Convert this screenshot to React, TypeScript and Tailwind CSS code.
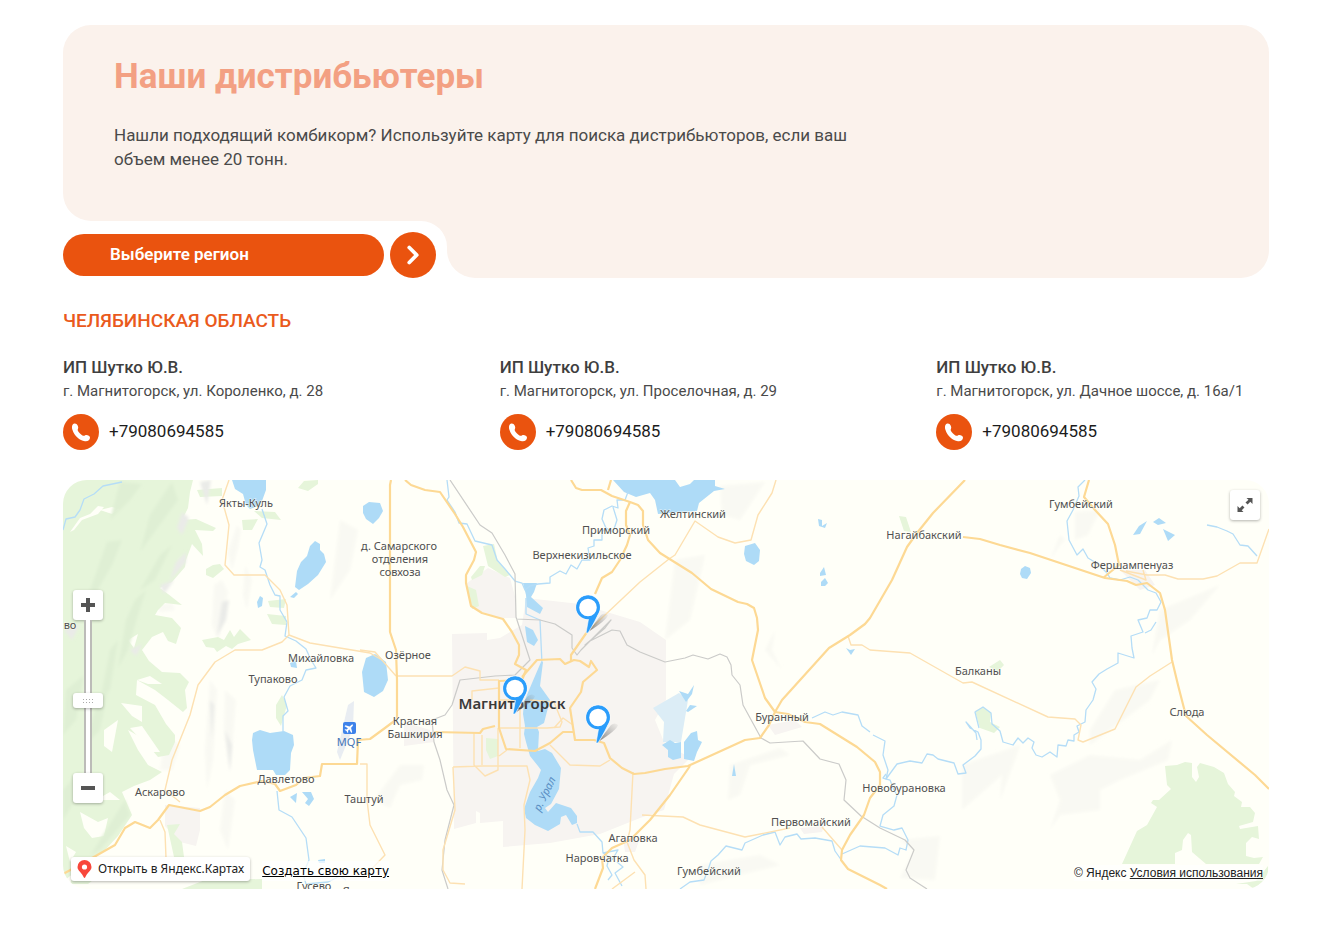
import { ChevronRight } from "lucide-react";

type Distributor = {
  name: string;
  address: string;
  phone: string;
};

type MapLabel = {
  text: string;
  x: number;
  y: number;
};

const distributors: Distributor[] = [
  {
    name: "ИП Шутко Ю.В.",
    address: "г. Магнитогорск, ул. Короленко, д. 28",
    phone: "+79080694585",
  },
  {
    name: "ИП Шутко Ю.В.",
    address: "г. Магнитогорск, ул. Проселочная, д. 29",
    phone: "+79080694585",
  },
  {
    name: "ИП Шутко Ю.В.",
    address: "г. Магнитогорск, ул. Дачное шоссе, д. 16а/1",
    phone: "+79080694585",
  },
];

const labels: MapLabel[] = [
  { text: "Якты-Куль", x: 246, y: 507 },
  { text: "д. Самарского", x: 399, y: 550 },
  { text: "отделения", x: 400, y: 563 },
  { text: "совхоза", x: 400, y: 576 },
  { text: "Приморский", x: 616, y: 534 },
  { text: "Верхнекизильское", x: 582, y: 559 },
  { text: "Желтинский", x: 693, y: 518 },
  { text: "Нагайбакский", x: 924, y: 539 },
  { text: "Гумбейский", x: 1081, y: 508 },
  { text: "Фершампенуаз", x: 1132, y: 569 },
  { text: "во", x: 70, y: 629 },
  { text: "Михайловка", x: 321, y: 662 },
  { text: "Тупаково", x: 273, y: 683 },
  { text: "Озёрное", x: 408, y: 659 },
  { text: "Красная", x: 415, y: 725 },
  { text: "Башкирия", x: 415, y: 738 },
  { text: "Давлетово", x: 286, y: 783 },
  { text: "Аскарово", x: 160, y: 796 },
  { text: "Таштуй", x: 364, y: 803 },
  { text: "Агаповка", x: 633, y: 842 },
  { text: "Наровчатка", x: 597, y: 862 },
  { text: "Гумбейский", x: 709, y: 875 },
  { text: "Первомайский", x: 811, y: 826 },
  { text: "Новобурановка", x: 904, y: 792 },
  { text: "Буранный", x: 782, y: 721 },
  { text: "Балканы", x: 978, y: 675 },
  { text: "Слюда", x: 1187, y: 716 },
  { text: "Гусево", x: 314, y: 890 },
  { text: "Янгельское", x: 373, y: 895 },
];

const forests = [
  "M63 480H193L190 492L188 508L182 520L196 519L216 528L213 531L195 530L202 544L203 556L192 544L186 560L185 567L172 582L160 588L168 594L182 605L165 603L158 610L155 615L172 618L181 628L176 644L168 641L163 632L152 637L142 650L149 661L162 672L180 673L189 682L185 690L187 708L183 712L168 700L155 690L137 680L136 695L155 705L166 724L175 735V742L169 755L158 757L142 738L128 730L138 750L148 765L162 772L150 780L134 786L122 792L132 815L118 836L105 850L84 866L70 876L63 882Z",
  "M197 490L222 488V496L200 497ZM242 520L258 519L252 530H243ZM254 511L275 512L281 520L262 518ZM298 488L304 481L318 480V484L308 491ZM206 569L213 565L220 564L224 569L213 578L206 575ZM202 640L218 637L224 640L230 630L234 637L240 629L251 640L238 644L232 649L226 646L217 652L214 648L206 647ZM268 601L286 599L284 608L270 607ZM267 614L286 616V625L272 624ZM276 705L282 695L287 705L281 726L276 718ZM167 825L180 824L174 834L182 842L184 857H174ZM78 862L102 858L108 868L88 884H70ZM182 889L205 880L262 879V889Z",
  "M483 546L494 544L498 562L510 575L505 577L488 566ZM471 577L480 566L485 566L482 575L472 580ZM467 586L476 590L479 606L472 609ZM486 738L498 739V756L490 759L486 750ZM899 516L906 517L911 532L904 531Z",
  "M975 711L983 707L991 713L990 722L1000 727L994 733L980 728ZM989 667L1000 660L1004 665L998 671Z",
  "M1165 766L1177 765L1185 762L1192 763L1192 777L1196 782L1199 777L1197 767L1200 763L1214 767L1224 773L1228 784L1235 792L1234 796L1242 802L1241 807L1250 807L1255 813L1253 822L1239 826L1240 829L1258 826L1259 839L1252 837L1246 843L1246 856L1254 858L1263 857L1259 864H1206L1192 852L1191 835L1188 833L1183 840L1182 850L1175 853V864H1122L1137 831L1147 825L1157 807L1151 803L1153 800L1159 800L1171 789L1167 785Z",
  "M1236 884L1256 881L1268 866V878L1254 889L1247 884Z",
];

// terrain relief, only slightly darker than the ground
const hills = [
  "M237 525L241 530L238 548L232 570L228 552ZM214 585L222 580L228 592L218 640L212 625ZM245 565L252 580L247 610L243 595ZM158 605L172 603L175 610L160 612ZM210 680L217 690L213 760L207 790L205 750ZM225 690L236 700L234 725L230 775L224 730ZM165 735L180 745L172 770L160 770ZM225 790L235 800L228 850L220 830Z",
  "M400 765L424 765L422 780L400 785L390 808L374 800ZM340 520L358 530L350 570L330 600ZM720 486L765 482L740 520L722 515ZM675 560L705 555L690 620L665 640ZM765 650L775 630L772 650L782 670ZM1060 545L1050 560L1060 535L1065 540ZM1075 512L1100 510L1088 535L1075 540ZM1160 610L1220 585L1190 620L1160 640L1152 655ZM962 765L1020 745L1015 760L1000 800L1002 775L962 810ZM1050 775L1090 755L1140 760L1172 740L1168 760L1120 780L1100 790L1100 810L1060 815L1050 830L1060 800ZM730 765L780 748L790 755L750 765L740 795L728 800ZM900 840L940 836L935 880L900 878L914 850ZM700 865L760 855L780 865L700 885ZM1115 690L1160 680L1150 700L1090 745L1090 730Z",
];

const urban = [
  "M452 634L487 633V640L500 638L522 625L526 598L580 604L640 622L666 640V700L655 720L664 742L690 758L674 774L664 810L640 818L600 834L550 843L503 847V821L480 823V813L476 811V823L454 829Z",
  "M467 583L488 568L510 578L516 600V618L500 618L472 608ZM768 725L795 720L802 727L775 735ZM165 805L200 808V830L196 846L180 842L165 826ZM1120 570L1145 570L1155 585L1140 590ZM404 722L430 730L434 742L404 746ZM800 828L824 826L822 832L804 834ZM623 838L640 838L635 852H625Z",
];

const lakes = [
  "M232 480L235 489L243 494L246 505L250 509L258 506L262 501L266 490V480Z",
  "M310 546L315 541L320 544V550L324 554L326 562L318 575L308 584L299 590L295 587L297 571L301 562L307 556Z",
  "M290 597L296 592L298 594L294 598ZM257 602L260 596L263 598L262 606L258 608Z",
  "M363 506L369 502L380 503L383 511L379 518L373 524L366 519L363 513Z",
  "M362 672L366 658L375 654L386 662L388 680L383 691L374 697L364 692Z",
  "M253 733L260 730L270 733L284 731L293 735L294 745L291 753L290 770L285 775H276L273 770L257 770L253 750L252 740Z",
  "M290 797L297 793L296 803ZM302 792L311 792L314 799L309 806L305 803L308 799Z",
  "M318 860L325 859V863L319 863ZM290 663L296 661L297 668L291 667Z",
  "M613 480H675L680 487L690 484L694 480H715V486L725 489L714 491L699 503L697 511L680 512L658 514L655 500L650 493L636 497L624 492Z",
  "M745 546L755 543L760 550L759 561L754 565L746 561L744 554Z",
  "M818 519L822 520L822 526L827 523L825 528L819 526ZM820 573L824 567L826 575L820 576ZM821 582L825 578L828 583L825 586H821ZM846 648L850 650L855 649L851 655Z",
  "M662 745L670 740L675 743L681 742V758L673 760L668 757V750ZM684 742L691 733L697 731L698 740L702 742L697 752L694 761L684 759Z",
  "M679 691L688 694L694 685L692 694L686 702ZM686 711L690 705L697 706L688 712ZM734 764L736 776H732Z",
  "M1133 535L1139 526L1147 521L1140 534ZM1153 522L1159 518L1166 523L1158 525ZM1163 529L1175 535L1168 541Z",
  "M1021 569L1025 566L1030 568L1031 573L1027 579L1022 578L1020 574Z",
  "M523 583H537L534 592L531 597L543 608L540 614L527 607L526 595Z",
  "M525 626L533 630L538 640L534 646L527 642Z",
  "M541 662L532 683L524 702L523 714L525 726L524 734L526 742L530 756L538 766L541 770L538 778L530 792L524 809L526 818L535 825L548 831L560 824L561 817L566 815L572 825L577 823V816L571 808L556 803L548 812L545 808L551 804L559 789L561 768L552 753L545 749L538 751L539 732L537 727L544 723L550 700L540 686L543 662Z",
];

const rivers = [
  "M63 530L66 519L75 517L80 510L84 499L94 494L103 486L122 482",
  "M262 509L267 524L259 543L262 560L260 567L265 570L270 585L275 595L280 596L280 610L287 622L285 636L296 641L306 649L311 660L316 668L306 670L302 680L290 686L284 697L288 711L283 716V732",
  "M277 791L279 810L292 817L300 829L306 838L309 860L303 874L306 884L328 882L340 876L346 880",
  "M447 480L449 497L447 500L455 512L459 523L467 524L475 541L492 545L497 560L505 569L515 581L522 583L525 590L530 586L538 584L550 583L550 577L560 571L566 574L571 565L577 569L582 560H590L588 548L594 546V540L602 540V532L606 528L602 519L604 510L612 506L618 508L617 500L625 500L628 492",
  "M606 528L613 532L617 520L613 507",
  "M526 598V614L540 620L542 664",
  "M577 824L580 832L593 832L602 842L603 853L609 857L607 866L612 875L608 880M617 862L623 867L615 873L622 886M603 853L618 850L612 860",
  "M812 718L825 712L833 715L842 712L858 715L862 726L870 732M873 735L885 741L883 755L888 770L886 779L897 764L910 761L922 763L927 754L933 755L938 759L954 763L958 774L966 773L963 765L975 756L981 749V740L978 732L970 728L966 722L976 733L977 740",
  "M886 774L883 778L890 780L894 790L897 795L894 806L883 815L880 826L894 830L902 828L908 840L906 850L900 848L898 855L885 848L860 846L842 854M842 861L835 851L832 841L815 838L801 839L797 834L785 837L780 845L775 832L763 835L745 843L742 850L726 846L718 855L711 861L708 870L704 880L690 882L680 889",
  "M1085 480L1078 487L1079 496L1073 510L1067 521L1069 540L1077 555L1083 549L1088 558L1098 564L1107 573L1110 578L1120 580L1130 577L1138 580L1148 590L1156 593L1161 602L1157 610H1150L1147 618L1138 620L1143 632L1131 636L1132 648L1134 658L1118 653V663L1107 669L1099 674L1092 682L1096 689L1093 700L1086 710L1085 722L1077 726L1079 732L1074 735V741L1068 740L1066 746L1058 745L1057 757L1050 752L1042 757L1036 755L1032 748L1034 742L1028 738L1023 743L1018 738L1013 745L1003 742L1000 731L992 724L991 713L983 707L975 712L979 728",
  "M1207 525L1217 527L1227 531L1233 534L1240 545L1248 546L1257 556M1156 622L1151 630L1145 633",
];

const mainRoads = [
  "M63 874L85 862L115 845L125 828L135 822L150 828L158 820L169 805L200 811L210 807L225 795L240 786L262 781L275 784L280 791L296 785L304 778L320 776L322 764H357L358 740L370 739L385 728L397 719V680L396 650L390 632V485L391 480",
  "M405 480L411 485L425 490L440 492L455 514L463 527L476 552L474 560L466 575V583L471 606L482 613L503 619L512 632L519 645V655L515 664L526 670L522 680L499 681V728L506 749L535 751L550 743L563 732H573",
  "M522 677L537 660L560 659L565 664L574 660L580 661L589 667L591 661L597 670L583 682L581 692L570 708L575 740H594L604 743L610 758L622 768L634 774L645 773L665 769L688 766L745 740L760 738L769 725L775 712L765 698L752 660L758 630L757 618L754 608L747 604L738 602L711 589L692 573L660 553L648 540L643 525V511L638 505L630 502L612 496L601 490H582L576 488L571 480",
  "M608 490L611 480M630 502L626 511V525L630 535L627 545L620 560L612 572L602 578L595 594M587 632L571 655V661",
  "M434 732L480 733L483 729L495 726",
  "M775 712L782 700L829 648L850 635L865 624L870 618L892 580L907 547L917 533L933 513L965 480M775 712L788 714L805 722L820 724L857 747L875 762L880 772V785L870 798L864 815L850 835L842 850L841 860L848 869L880 885L887 889",
  "M690 766L670 795L650 820L630 840L612 848L602 858L603 868L595 889",
  "M963 537L980 539L1000 545L1030 553L1105 578L1127 581L1136 585L1147 583L1160 593L1165 610L1172 660L1178 685L1186 716L1207 735L1255 775L1269 789M1089 480L1084 497L1095 510L1108 524L1115 545L1119 565L1103 578",
];

const minorRoads = [
  "M229 480L222 500L229 525L225 565L234 575H265L280 590L287 605L289 635L310 643L370 653L382 660M289 635L282 642L262 650H235L215 662L198 685L190 715L172 760L165 790L180 802M160 820L165 832L166 858",
  "M360 650L375 652L396 676M397 676H452L465 667L480 671V680H499M499 688L472 691V700M474 733V765L485 776L498 770V728M482 735V765M453 767L482 766H527L530 780L524 805L525 830L522 889M453 767L455 810L443 850V870L450 883L465 884M550 745L570 765L600 766L610 760M499 728H547L560 727L562 722L554 702L530 700M499 700H520V748M499 756L507 750M554 728L563 718L573 725",
  "M360 764H367V800L370 825L385 855L363 878M633 772L630 830L627 842L634 860L645 875L646 889M635 872L612 889M642 815L683 817L700 825L745 837L790 828M822 827L842 850",
  "M587 632L640 582L669 559L675 555L695 521L718 537L735 543L751 540L758 515L772 493L776 480",
  "M848 636L851 645H862L870 650L910 653L963 683L972 682L1048 717L1075 719L1081 725L1078 740L1083 742L1115 729L1136 687L1150 676L1172 662M1120 570L1146 580L1143 570M1126 571L1147 575H1165L1178 579H1203L1217 576L1240 563H1257L1269 529",
];

const railways =
  "M450 480L480 525L492 533L505 555L515 574L516 617L530 660L515 675L495 676L460 680L452 705L445 715L432 720L434 742L440 760L447 790L454 805L445 840L442 870L448 889M516 619L540 620L555 624L572 635V648L577 655L581 650L611 620L605 628L585 645L590 641L612 630L620 631L627 645L640 652L665 662L685 658L693 655L708 659L720 654L727 657L731 665L732 675L740 685L743 705L761 738L770 743L803 741L820 759L839 764L846 780L844 800L861 816L880 828L905 840L914 850L906 870L910 878L927 889";

const pins = [
  { x: 587, y: 632 },
  { x: 514, y: 713 },
  { x: 597, y: 742 },
];

function RegionMap() {
  return (
    <svg
      className="block h-full w-full"
      viewBox="63 480 1206 409"
      preserveAspectRatio="xMidYMid slice"
      role="img"
      aria-label="Карта дистрибьюторов"
    >
      <defs>
        <linearGradient id="pinShadow" x1="0" y1="1" x2="1" y2="0">
          <stop offset="0" stopColor="#555" stopOpacity="0.75" />
          <stop offset="1" stopColor="#777" stopOpacity="0.05" />
        </linearGradient>
        <filter id="relief">
          <feGaussianBlur stdDeviation="1.5" />
        </filter>
      </defs>
      <rect x="63" y="480" width="1206" height="409" fill="#fffff8" />
      <g fill="#f9f9f3" filter="url(#relief)">
        {hills.map((d) => (
          <path key={d} d={d} />
        ))}
      </g>
      <g fill="#f7f4f1">
        {urban.map((d) => (
          <path key={d} d={d} />
        ))}
      </g>
      <g fill="#e6f5da">
        {forests.map((d) => (
          <path key={d} d={d} />
        ))}
      </g>
      {/* clearings and ridges inside the western forest */}
      <path
        d="M70 532L80 518L90 514L98 506L104 507L98 514L82 520L74 530ZM100 510L112 507L119 509L112 514ZM137 680L150 676L162 684L148 684ZM121 703L142 706V722L132 716ZM130 728L142 726L160 752L152 752ZM104 730L118 720L115 736L112 752L104 746ZM80 812L98 822L108 818L104 836L92 838L84 828ZM128 640L138 634L134 648ZM66 846L76 852L70 862ZM96 800L110 792L120 800Z"
        fill="#fffff8"
      />
      <g filter="url(#relief)">
        <path
          d="M107 542L122 540L112 565L92 600L84 625L90 590ZM172 482L178 500L156 530L140 552L150 515ZM120 482L142 484L130 500L110 520ZM135 600L146 590L138 615L128 650L118 668L126 620ZM66 690L84 675L76 720L63 735ZM95 710L108 690L100 730L85 745ZM63 790L80 770L75 800L63 820ZM160 555L172 545L155 580L140 590ZM110 650L118 640L110 690L100 700ZM125 800L130 815L100 850L90 856Z"
          fill="#dfefd4"
        />
        <path
          d="M182 512L189 518L182 535L177 528ZM176 562L186 552V562L170 580ZM160 585L174 580L164 594ZM130 650L142 644L136 656ZM64 630L80 624L72 640ZM200 482L211 480L207 505ZM222 602L229 600L226 620L217 636ZM225 730L232 745L230 770ZM210 700L214 705L212 740Z"
          fill="#eaebe8"
        />
      </g>
      <path d="M653 708L679 693L688 700L681 742L663 742L664 722Z" fill="#dcedf6" />
      <path d="M348 705L354 701L353 728L340 760L337 752Z" fill="#e9edf2" />
      <g fill="#aedbf7">
        {lakes.map((d) => (
          <path key={d} d={d} />
        ))}
      </g>
      <g fill="none" stroke="#b5ddf7" strokeWidth="1.3" strokeLinejoin="round">
        {rivers.map((d) => (
          <path key={d} d={d} />
        ))}
      </g>
      <path d={railways} fill="none" stroke="#cbcbc9" strokeWidth="1.2" strokeLinejoin="round" />
      <g fill="none" stroke="#fde1b2" strokeWidth="1.4" strokeLinejoin="round">
        {minorRoads.map((d) => (
          <path key={d} d={d} />
        ))}
      </g>
      <g fill="none" stroke="#fdd994" strokeWidth="2.2" strokeLinejoin="round">
        {mainRoads.map((d) => (
          <path key={d} d={d} />
        ))}
      </g>

      <g
        className="font-['Noto_Sans',sans-serif] text-[11px]"
        fill="#505050"
        stroke="#fffff8"
        strokeWidth="1"
        strokeOpacity="0.7"
        paintOrder="stroke"
        textAnchor="middle"
      >
        {labels.map((label) => (
          <text key={`${label.text}-${label.x}`} x={label.x} y={label.y}>
            {label.text}
          </text>
        ))}
      </g>
      <text
        x="512"
        y="709"
        textAnchor="middle"
        fill="#3a3a3a"
        className="font-['Noto_Sans',sans-serif] text-[15px] font-semibold"
      >
        Магнитогорск
      </text>
      <text
        x="540"
        y="812"
        transform="rotate(-64 540 812)"
        fill="#5a8fc4"
        className="font-['Noto_Sans',sans-serif] text-[11px] italic"
      >
        р. Урал
      </text>

      <rect x="343" y="722" width="13" height="12" rx="2" fill="#3f83ea" />
      <path
        d="M0 -5Q1 -4.500 1 -2V-1.200L4.800 1V2.200L1 1.200V3L2.200 4V4.800L0 4.300L-2.200 4.800V4L-1 3V1.200L-4.800 2.200V1L-1 -1.200V-2Q-1 -4.500 0 -5Z"
        fill="#fff"
        transform="translate(349.5 728) rotate(45)"
      />
      <text
        x="349"
        y="746"
        textAnchor="middle"
        fill="#4673b5"
        className="font-['Noto_Sans',sans-serif] text-[11px]"
      >
        MQF
      </text>

      {pins.map((pin) => (
        <g key={`${pin.x}-${pin.y}`} transform={`translate(${pin.x} ${pin.y})`}>
          <path d="M1 0L14 -17Q18 -20 21 -17Q20 -12 1 0Z" fill="url(#pinShadow)" />
          <path
            d="M-1 1L1.500 -13A12 12 0 1 1 12 -20Q9 -12 1 1Z"
            fill="#2b9dfb"
            stroke="#fff"
            strokeWidth="0.600"
          />
          <circle cx="1" cy="-24.500" r="10.300" fill="#fff" stroke="#2b9dfb" strokeWidth="3" />
        </g>
      ))}
    </svg>
  );
}

const mapButton =
  "grid h-[30px] w-[30px] place-items-center rounded-[3px] bg-white text-[#555] shadow-[0_1px_3px_rgba(0,0,0,0.3)]";

function MapPanel() {
  return (
    <section className="relative mt-[30px] h-[409px] overflow-hidden rounded-3xl">
      <RegionMap />

      <div className="absolute left-[10px] top-[110px] flex flex-col items-center">
        <button type="button" aria-label="Приблизить" className={mapButton}>
          <svg width="16" height="16" viewBox="0 0 16 16">
            <path d="M8 1v14M1 8h14" stroke="currentColor" strokeWidth="4" />
          </svg>
        </button>
        <input
          type="range"
          aria-label="Масштаб"
          min={0}
          max={100}
          defaultValue={47}
          className="m-0 h-[153px] w-[30px] cursor-pointer appearance-none bg-[linear-gradient(90deg,transparent_11px,#bcbcb8_11px,#bcbcb8_13px,#fff_13px,#fff_17px,#bcbcb8_17px,#bcbcb8_19px,transparent_19px)] [direction:rtl] [writing-mode:vertical-lr] [&::-webkit-slider-thumb]:h-[15px] [&::-webkit-slider-thumb]:w-[30px] [&::-webkit-slider-thumb]:appearance-none [&::-webkit-slider-thumb]:rounded-[3px] [&::-webkit-slider-thumb]:[background:repeating-linear-gradient(90deg,#aaa_0_1px,transparent_1px_3px)_10px_6px/10px_1px_no-repeat,repeating-linear-gradient(90deg,#aaa_0_1px,transparent_1px_3px)_10px_9px/10px_1px_no-repeat,#fff] [&::-webkit-slider-thumb]:shadow-[0_1px_3px_rgba(0,0,0,0.3)]"
        />
        <button type="button" aria-label="Отдалить" className={mapButton}>
          <svg width="16" height="16" viewBox="0 0 16 16">
            <path d="M1 8h14" stroke="currentColor" strokeWidth="4" />
          </svg>
        </button>
      </div>

      <button type="button" aria-label="На весь экран" className={`${mapButton} absolute right-[9px] top-[10px]`}>
        <svg width="16" height="16" viewBox="0 0 16 16" fill="currentColor">
          <path d="M9.500 1H15.500V7L13.300 4.800L10.600 7.500L8.500 5.400L11.500 2.800ZM6.500 15H0.500V9L2.700 11.200L5.400 8.500L7.500 10.600L4.700 13.200Z" />
        </svg>
      </button>

      <div className="absolute bottom-2 left-2 flex items-end gap-3">
        <a
          href="#yandex-maps"
          className="flex h-6 items-center gap-1.5 rounded-[3px] bg-white px-1.5 font-['Noto_Sans',sans-serif] text-xs text-[#222] shadow-[0_1px_3px_rgba(0,0,0,0.3)]"
        >
          <svg width="15" height="18" viewBox="0 0 15 18">
            <path
              d="M7.500 0A7 7 0 0 0 0.500 7C0.500 11 5 12.500 6.700 17.300Q7.500 18.500 8.300 17.300C10 12.500 14.500 11 14.500 7A7 7 0 0 0 7.500 0Z"
              fill="#f8473b"
            />
            <circle cx="7.500" cy="7" r="2.600" fill="#fff" />
          </svg>
          Открыть в Яндекс.Картах
        </a>
        <a
          href="#create-map"
          className="bg-white/70 font-['DejaVu_Sans',sans-serif] text-xs leading-5 text-black underline"
        >
          Создать свою карту
        </a>
      </div>

      <p className="absolute bottom-2 right-1.5 bg-white/60 font-['Liberation_Sans',sans-serif] text-xs leading-4 text-[#222]">
        © Яндекс{" "}
        <a href="#terms" className="underline">
          Условия использования
        </a>
      </p>
    </section>
  );
}

function Hero() {
  return (
    <header>
      <div className="rounded-t-[28px] rounded-bl-[28px] bg-[#fbf2ec] px-[51px] pb-[50px] pt-8">
        <h1 className="text-[35px] font-bold leading-10 text-[#f3a083]">Наши дистрибьютеры</h1>
        <p className="mt-[26px] max-w-[750px] text-[17px] leading-6 text-[#4a4a4a]">
          Нашли подходящий комбикорм? Используйте карту для поиска дистрибьюторов, если ваш объем менее 20 тонн.
        </p>
      </div>
      <div className="flex">
        <div className="bg-[#fbf2ec]">
          <div className="flex items-center gap-1.5 rounded-tr-[26px] bg-white pr-[11px] pt-[11px]">
            <button
              type="button"
              className="h-[42px] w-[321px] rounded-full bg-[#ea530f] px-[47px] text-left text-[17px] font-semibold text-white"
            >
              Выберите регион
            </button>
            <button
              type="button"
              aria-label="Показать"
              className="grid h-[46px] w-[46px] place-items-center rounded-full bg-[#ea530f] text-white"
            >
              <ChevronRight size={30} strokeWidth={3} />
            </button>
          </div>
        </div>
        <div className="flex-1 rounded-b-[28px] bg-[#fbf2ec]" />
      </div>
    </header>
  );
}

export default function App() {
  return (
    <main className="min-h-screen bg-white pb-[39px] pl-[63px] pr-[71px] pt-[25px] font-['Roboto',sans-serif]">
      <Hero />

      <section>
        <h2 className="mt-[31px] text-[19px] font-medium uppercase leading-6 text-[#ea5a1c]">Челябинская область</h2>
        <ul className="mt-[22px] grid grid-cols-3 gap-[104px]">
          {distributors.map((item) => (
            <li key={item.address} className="whitespace-nowrap">
              <h3 className="text-[17px] font-medium leading-6 text-[#3f3f3f]">{item.name}</h3>
              <p className="text-[15px] leading-6 text-[#4a4a4a]">{item.address}</p>
              <a href={`tel:${item.phone}`} className="mt-[11px] flex items-center gap-2.5 text-[17px] text-[#1c1c1c]">
                <span className="grid h-9 w-9 place-items-center rounded-full bg-[#ea530f] text-white">
                  <svg width="20" height="20" viewBox="-10 -10 20 20" fill="currentColor">
                    <path d="M-6.500 -8.500C-9 -8 -9.500 -5 -8.500 -2C-6.500 4 -1.500 8.500 4 9.200C7 9.500 9 8 9 5.500C9 3.500 5.500 2.500 4.200 3.300C2.800 4.300 1.500 4 -1 1.500C-3.200 -0.700 -3.800 -1.800 -3 -3.200C-2 -5 -4 -9 -6.500 -8.500Z" />
                  </svg>
                </span>
                {item.phone}
              </a>
            </li>
          ))}
        </ul>
      </section>

      <MapPanel />
    </main>
  );
}
